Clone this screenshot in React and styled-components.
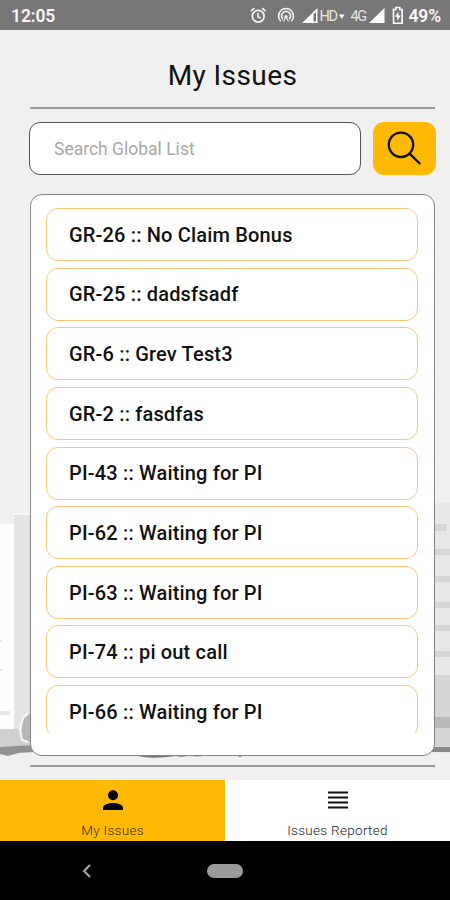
import styled, { createGlobalStyle, ThemeProvider } from "styled-components";

const theme = {
  yellow: "#ffb905",
  orange: "#fbc777",
  grey: "#777777",
  line: "#9b9b9b",
  background: "#f0f0f0",
};

const GlobalStyle = createGlobalStyle`
  * {
    box-sizing: border-box;
  }
  body {
    margin: 0;
    font-family: Roboto, "Liberation Sans", sans-serif;
  }
  button {
    border: 0;
    padding: 0;
    font-family: inherit;
  }
`;

const Screen = styled.div`
  position: relative;
  display: flex;
  flex-direction: column;
  width: 450px;
  height: 900px;
  overflow: hidden;
  background: ${({ theme }) => theme.background};
`;

const Scenery = styled.svg`
  position: absolute;
  top: 480px;
  left: 0;
`;

const StatusBar = styled.header`
  display: flex;
  align-items: center;
  justify-content: space-between;
  height: 30px;
  padding: 2px 9px 0 11px;
  background: ${({ theme }) => theme.grey};
  color: #f7f7f7;
`;

const Clock = styled.span`
  font-size: 17.5px;
  font-weight: 600;
  letter-spacing: -0.1px;
`;

const StatusGroup = styled.div`
  display: flex;
  align-items: center;
  height: 28px;

  & > svg {
    flex: none;
  }
`;

const Network = styled.span`
  width: ${({ $width }) => $width}px;
  font-size: 14.5px;
  letter-spacing: -1.2px;
  white-space: nowrap;
  color: #e6e6e6;
`;

const Battery = styled.span`
  margin-left: 3px;
  font-size: 17.5px;
  font-weight: 600;
  letter-spacing: -0.1px;
`;

const Main = styled.main`
  position: relative;
  display: flex;
  flex-direction: column;
  flex: 1;
  padding: 0 15px 0 30px;
`;

const Title = styled.h1`
  margin: 0;
  height: 77px;
  line-height: 92px;
  font-size: 28px;
  font-weight: 400;
  letter-spacing: 0.4px;
  text-align: center;
  color: #111;
`;

const Rule = styled.div`
  height: 2px;
  background: ${({ theme }) => theme.line};
`;

const SearchRow = styled.div`
  display: flex;
  justify-content: space-between;
  margin: 13px -1px 19px;
`;

const SearchInput = styled.input`
  width: 332px;
  height: 53px;
  padding: 0 24px;
  border: 1px solid #555;
  border-radius: 11px;
  background: #fff;
  font-family: inherit;
  font-size: 17.5px;
  letter-spacing: 0;
  &::placeholder {
    color: #a8a8a8;
  }
`;

const SearchButton = styled.button`
  display: flex;
  align-items: center;
  justify-content: center;
  width: 63px;
  height: 53px;
  border-radius: 11px;
  background: ${({ theme }) => theme.yellow};
`;

const Panel = styled.section`
  height: 562px;
  padding: 13px 16px 21px 15px;
  border: 1px solid #858585;
  border-radius: 12px;
  background: #fff;
`;

const IssueList = styled.ul`
  display: flex;
  flex-direction: column;
  gap: 6.65px;
  height: 525px;
  margin: 0;
  padding: 0;
  overflow: hidden;
  list-style: none;
`;

const Issue = styled.li`
  display: flex;
  flex: none;
  align-items: center;
  height: 53px;
  padding: 0.5px 0 0 22px;
  border: 1.4px solid ${({ theme }) => theme.orange};
  border-radius: 12px;
  font-size: 20px;
  font-weight: 500;
  letter-spacing: 0.17px;
  color: #111;
`;

const BottomRule = styled(Rule)`
  margin-top: 9px;
`;

const TabBar = styled.nav`
  position: relative;
  display: flex;
  height: 61px;
`;

const Tab = styled.button`
  display: flex;
  flex: 1;
  flex-direction: column;
  align-items: center;
  padding-top: 6px;
  background: ${({ $active, theme }) => ($active ? theme.yellow : "#fff")};
  color: ${({ $active }) => ($active ? "#402e00" : "#222")};
  font-size: 13.5px;
  font-weight: 300;
  letter-spacing: 0.3px;
`;

const TabLabel = styled.span`
  margin-top: 4px;
  line-height: 17px;
`;

const SystemBar = styled.footer`
  position: relative;
  display: grid;
  grid-template-columns: 174px 102px 174px;
  place-items: center;
  height: 59px;
  background: #000;
`;

const HomePill = styled.div`
  width: 36px;
  height: 14px;
  border-radius: 7px;
  background: #9a9a9a;
`;

const issues = [
  "GR-26 :: No Claim Bonus",
  "GR-25 :: dadsfsadf",
  "GR-6 :: Grev Test3",
  "GR-2 :: fasdfas",
  "PI-43 :: Waiting for PI",
  "PI-62 :: Waiting for PI",
  "PI-63 :: Waiting for PI",
  "PI-74 :: pi out call",
  "PI-66 :: Waiting for PI",
];

function StatusIcons() {
  return (
    <StatusGroup>
      <svg width="69" height="20" viewBox="0 0 69 20" fill="none" stroke="#f4f4f4">
        <circle cx="8.2" cy="10.3" r="5.9" strokeWidth="1.7" />
        <path d="M8 6.8v4l2.7 1.5M.9 5.2l3.4-3M15.5 5.2l-3.4-3" strokeWidth="1.6" />
        <path
          d="M30.8 15.2a7.4 7.4 0 1 1 10.4 0M33 13.2a4.5 4.5 0 1 1 6 0"
          strokeWidth="1.6"
        />
        <circle cx="36" cy="10.5" r="1.6" fill="#f4f4f4" stroke="none" />
        <path d="M36 10.5l-2.5 5M36 10.5l2.5 5" strokeWidth="1.1" />
        <path d="M52 17L67.5 2v15z" fill="#fff" stroke="none" />
        <path d="M63.5 8.3L66 6v9.5h-2.5z" fill="#777" stroke="none" />
      </svg>
      <Network $width={20}>HD</Network>
      <svg width="11" height="20">
        <path d="M0 8.5h5.5L2.75 13z" fill="#fff" />
      </svg>
      <Network $width={18}>4G</Network>
      <svg width="37" height="20">
        <path d="M1 17L16.5 2v15z" fill="#fff" />
        <path d="M25.5 3.5h2.3V1.5h4v2h2.3v13.7h-8.6z" fill="none" stroke="#fff" strokeWidth="1.6" />
        <path d="M30.5 5.5l-3.6 5.2h2.4V15l3.5-5.4h-2.3z" fill="#fff" />
      </svg>
      <Battery>49%</Battery>
    </StatusGroup>
  );
}

function TruckScenery() {
  return (
    <Scenery width="450" height="290">
      <path d="M0 44h14v206H0z" fill="#fdfdfd" />
      <path d="M14 34h17v216H14z" fill="#e4e4e6" />
      <path d="M13 33h18v2H13z" fill="#f9f9f9" />
      <path d="M0 231h10v4H0z" fill="#e8e8e8" />
      <path d="M0 160h2v2H0zM0 189h2v2H0z" fill="#e4e4e4" />
      <path d="M0 249h18l13-2v24H0z" fill="#d0d0d0" />
      <path d="M0 267l34-2v7l-15 1-11 3-8-2z" fill="#929292" />
      <path d="M31 234c-7 0-9 7-9 15 0 9-3 11 9 13z" fill="#b7b7b7" />
      <path d="M28 234c-6 2-7 10-8 16l2 10 6 2" fill="none" stroke="#f7f7f7" strokeWidth="2" />
      <path d="M434 23h16v250h-16z" fill="#e8e8e8" />
      <path
        d="M434 44h13v7h-13zM434 69h16v6h-16zM434 96h16v6h-16zM434 122h16v6h-16zM434 145h16v6h-16zM434 171h16v6h-16z"
        fill="#d7d7d7"
      />
      <path d="M434 195h16v73h-16z" fill="#d6d6d6" />
      <path d="M434 237h16v11h-16z" fill="#bababa" />
      <path d="M430 267h20v5h-20z" fill="#888" />
      <path d="M92 275h10l-2 1h-6zM133 275h72q-8 3-16 0-6 3-13 1-20 3-33 1zM236 275h8l-4 2zM344 275h8l-2 1h-5z" fill="#777" />
    </Scenery>
  );
}

export default function App() {
  return (
    <ThemeProvider theme={theme}>
      <GlobalStyle />
      <Screen>
        <TruckScenery />
        <StatusBar>
          <Clock>12:05</Clock>
          <StatusIcons />
        </StatusBar>
        <Main>
          <Title>My Issues</Title>
          <Rule />
          <SearchRow>
            <SearchInput placeholder="Search Global List" />
            <SearchButton aria-label="Search">
              <svg width="37" height="37" fill="none" stroke="#111" strokeWidth="2.3">
                <circle cx="15" cy="14.8" r="12.2" />
                <path d="M23.6 23.6l10 9.8" strokeLinecap="round" />
              </svg>
            </SearchButton>
          </SearchRow>
          <Panel>
            <IssueList>
              {issues.map((issue) => (
                <Issue key={issue}>{issue}</Issue>
              ))}
            </IssueList>
          </Panel>
          <BottomRule />
        </Main>
        <TabBar>
          <Tab $active>
            <svg width="30" height="32" fill="#000">
              <circle cx="15" cy="9.2" r="5" />
              <path d="M5 24v-2c0-3.4 5-5 10-5s10 1.6 10 5v2z" />
            </svg>
            <TabLabel>My Issues</TabLabel>
          </Tab>
          <Tab>
            <svg width="30" height="32" stroke="#111" strokeWidth="2">
              <path d="M5 6.5h20M5 11.5h20M5 16.5h20M5 21.5h20" />
            </svg>
            <TabLabel>Issues Reported</TabLabel>
          </Tab>
        </TabBar>
        <SystemBar>
          <svg width="10" height="14" fill="none" stroke="#aaa" strokeWidth="2">
            <path d="M8 1L2 7l6 6" />
          </svg>
          <HomePill />
        </SystemBar>
      </Screen>
    </ThemeProvider>
  );
}
